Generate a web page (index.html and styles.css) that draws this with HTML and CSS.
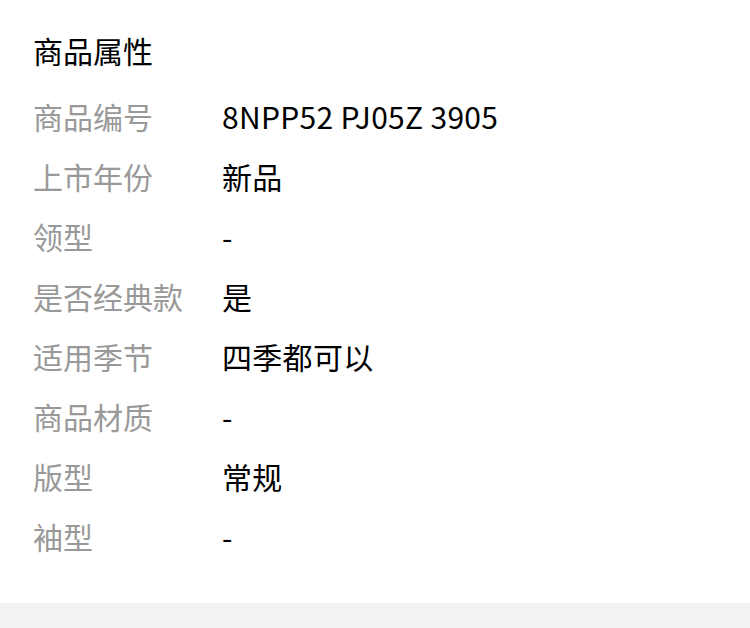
FILE: index.html
```html
<!DOCTYPE html>
<html lang="zh-CN">
<head>
  <meta charset="UTF-8" />
  <meta name="viewport" content="width=device-width, initial-scale=1.0" />
  <title>商品属性</title>
  <link rel="stylesheet" href="styles.css">
</head>
<body>

  <div class="attrs">
    <h2 class="attrs-title">商品属性</h2>
    <div class="attr-row"><span class="attr-label">商品编号</span><span class="attr-value">8NPP52 PJ05Z 3905</span></div>
    <div class="attr-row"><span class="attr-label">上市年份</span><span class="attr-value">新品</span></div>
    <div class="attr-row"><span class="attr-label">领型</span><span class="attr-value">-</span></div>
    <div class="attr-row"><span class="attr-label">是否经典款</span><span class="attr-value">是</span></div>
    <div class="attr-row"><span class="attr-label">适用季节</span><span class="attr-value">四季都可以</span></div>
    <div class="attr-row"><span class="attr-label">商品材质</span><span class="attr-value">-</span></div>
    <div class="attr-row"><span class="attr-label">版型</span><span class="attr-value">常规</span></div>
    <div class="attr-row"><span class="attr-label">袖型</span><span class="attr-value">-</span></div>
  </div>

  <div class="footer-gap"></div>

</body>
</html>
```

FILE: styles.css
```css
* {
  box-sizing: border-box;
  margin: 0;
  padding: 0;
}

body {
  font-family: "Noto Sans CJK SC", "Noto Sans", sans-serif;
  background-color: #ffffff;
  color: #000;
}

.attrs {
  padding: 30px 33px 37px;
}

.attrs-title {
  font-size: 30px;
  font-weight: normal;
  line-height: 40px;
  color: #000;
  margin-bottom: 16px;
}

.attr-row {
  display: flex;
  align-items: center;
  height: 60px;
  font-size: 30px;
}

.attr-label {
  width: 189px;
  flex-shrink: 0;
  color: #999;
}

.attr-value {
  color: #000;
  letter-spacing: 0.3px;
}

.footer-gap {
  height: 25px;
  background-color: #f2f2f2;
}
```
